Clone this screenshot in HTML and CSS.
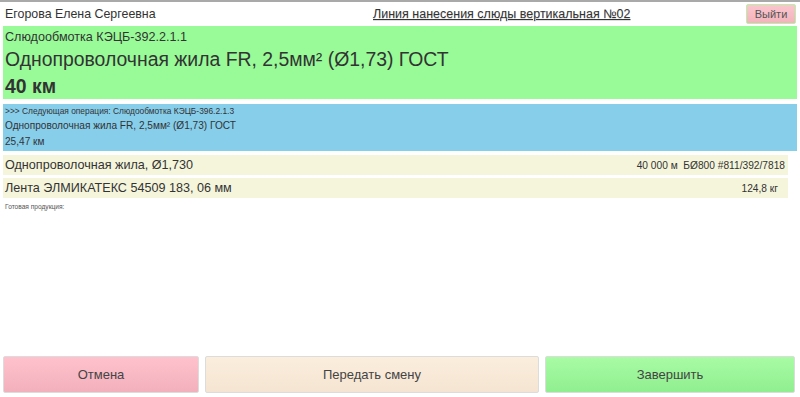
FILE: index.html
```html
<!DOCTYPE html>
<html lang="ru">
<head>
    <meta charset="UTF-8">
    <title>Линия нанесения слюды вертикальная №02</title>
    <link rel="stylesheet" href="styles.css">
</head>
<body>
    <div class="page">
        <div class="header">
            <span class="user">Егорова Елена Сергеевна</span>
            <a href="#" class="line-title">Линия нанесения слюды вертикальная №02</a>
            <button class="logout">Выйти</button>
        </div>
        <div class="current">
            <div class="op-name">Слюдообмотка КЭЦБ-392.2.1.1</div>
            <div class="product">Однопроволочная жила FR, 2,5мм² (Ø1,73) ГОСТ</div>
            <div class="amount">40 км</div>
        </div>
        <div class="next">
            <div class="next-op">&gt;&gt;&gt; Следующая операция: Слюдообмотка КЭЦБ-396.2.1.3</div>
            <div class="next-line">Однопроволочная жила FR, 2,5мм² (Ø1,73) ГОСТ</div>
            <div class="next-line">25,47 км</div>
        </div>
        <div class="materials">
            <div class="material">
                <span class="mat-name">Однопроволочная жила, Ø1,730</span>
                <span class="mat-info">40 000 м&nbsp;&nbsp;БØ800 #811/392/7818</span>
            </div>
            <div class="material">
                <span class="mat-name">Лента ЭЛМИКАТЕКС 54509 183, 06 мм</span>
                <span class="mat-info short">124,8 кг</span>
            </div>
        </div>
        <div class="ready">Готовая продукция:</div>
        <div class="actions">
            <button class="btn cancel">Отмена</button>
            <button class="btn handover">Передать смену</button>
            <button class="btn finish">Завершить</button>
        </div>
    </div>
</body>
</html>
```

FILE: styles.css
```css
html, body {
    margin: 0;
    padding: 0;
    height: 100%;
}
body {
    font-family: "Liberation Sans", Arial, sans-serif;
    color: #333;
    background-color: #fff;
}
.page {
    box-sizing: border-box;
    height: 100%;
    display: flex;
    flex-direction: column;
    border-top: 2px solid #a9a9a9;
    padding: 0 6px 4px 3px;
}
.header {
    display: flex;
    align-items: center;
    height: 24px;
    padding-left: 2px;
}
.user {
    font-size: 12.4px;
    width: 368px;
}
.line-title {
    font-size: 12.5px;
    color: #333;
    text-decoration: underline;
    text-shadow: 0 1px 0 #ddd;
}
.logout {
    margin-left: auto;
    margin-right: -2px;
    height: 20px;
    width: 50px;
    padding: 0;
    font-family: inherit;
    font-size: 11px;
    color: #555;
    background: linear-gradient(#fbc6ce, #f2b3bc);
    border: 1px solid #b8f0a8;
    border-radius: 2px;
}
.current {
    background-color: #98fb98;
    height: 73px;
    padding: 3px 2px 0;
    box-sizing: border-box;
    margin-right: -3px;
}
.op-name {
    font-size: 12.6px;
    line-height: 17px;
}
.product {
    font-size: 19.4px;
    line-height: 25px;
    margin-top: 1px;
}
.amount {
    font-size: 19.4px;
    font-weight: bold;
    line-height: 24px;
    margin-top: 2px;
}
.next {
    background-color: #87ceeb;
    height: 47px;
    margin-top: 5px;
    margin-right: -3px;
    padding: 1px 2px 0;
    box-sizing: border-box;
}
.next-op {
    font-size: 8.4px;
    line-height: 13px;
}
.next-line {
    font-size: 10.1px;
    line-height: 16px;
}
.materials {
    margin-top: 4px;
    margin-right: 6px;
    display: flex;
    flex-direction: column;
    gap: 3px;
}
.material {
    background-color: #f5f5dc;
    display: flex;
    align-items: center;
    justify-content: space-between;
    height: 20px;
    padding: 0 2px;
}
.mat-name {
    font-size: 12.6px;
}
.mat-info {
    font-size: 10.2px;
    padding-right: 1px;
}
.mat-info.short {
    padding-right: 8px;
}
.ready {
    font-size: 6.6px;
    color: #555;
    margin-top: 5px;
    padding-left: 2px;
}
.actions {
    margin-top: auto;
    margin-right: -1px;
    display: flex;
    gap: 6px;
}
.btn {
    height: 37px;
    font-family: inherit;
    font-size: 13px;
    color: #444;
    border: 1px solid #dcdcdc;
    border-radius: 2px;
    padding: 0;
}
.cancel {
    width: 196px;
    background: linear-gradient(#ffc2cc, #f2b0bc);
}
.handover {
    width: 334px;
    background: linear-gradient(#fbeedd, #f5e4d2);
}
.finish {
    flex: 1;
    background: linear-gradient(#a8fca4, #90ee90);
}
```
